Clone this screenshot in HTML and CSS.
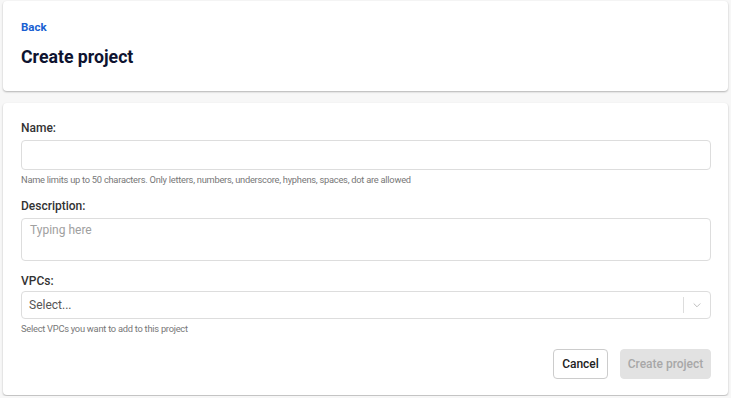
FILE: index.html
```html
<!DOCTYPE html>
<html lang="en">
<head>
    <meta charset="UTF-8">
    <meta name="viewport" content="width=device-width, initial-scale=1.0">
    <title>Create project</title>
    <link rel="stylesheet" href="styles.css">
</head>
<body>
    <div class="page">
        <div class="card header-card">
            <a href="#" class="back-link">Back</a>
            <h1>Create project</h1>
        </div>

        <div class="card form-card">
            <div class="field">
                <label for="name-input">Name:</label>
                <input type="text" id="name-input" class="text-input">
                <div class="hint">Name limits up to 50 characters. Only letters, numbers, underscore, hyphens, spaces, dot are allowed</div>
            </div>

            <div class="field">
                <label for="desc-input">Description:</label>
                <textarea id="desc-input" placeholder="Typing here"></textarea>
            </div>

            <div class="field last">
                <label class="tight">VPCs:</label>
                <div class="select">
                    <span class="select-placeholder">Select...</span>
                    <span class="select-sep"></span>
                    <span class="select-arrow">
                        <svg width="12" height="12" viewBox="0 0 20 20"><path d="M4.5 7.5 L10 13 L15.5 7.5" fill="none" stroke="#bbb" stroke-width="1.6"/></svg>
                    </span>
                </div>
                <div class="hint">Select VPCs you want to add to this project</div>
            </div>

            <div class="actions">
                <button class="btn btn-outline">Cancel</button>
                <button class="btn btn-disabled" disabled>Create project</button>
            </div>
        </div>
    </div>
</body>
</html>
```

FILE: styles.css
```css
:root {
    --bg-color: #f7f7f7; --card-bg: #fff; --text-color: #333;
    --title-color: #0e1330; --link-color: #1a5fd2; --border-color: #ddd;
    --hint-color: #777;
}
body {
    font-family: Roboto, "Noto Sans", sans-serif;
    background-color: var(--bg-color); color: var(--text-color);
    margin: 0; padding: 1px 3px; box-sizing: border-box;
}
.page { display: flex; flex-direction: column; gap: 12px; }
.card {
    background-color: var(--card-bg); border-radius: 4px;
    box-shadow: 0 1px 2px rgba(0, 0, 0, 0.28);
}
.header-card { padding: 19px 18px 22px; height: 90px; box-sizing: border-box; }
.back-link {
    display: block; color: var(--link-color); font-size: 11.5px; font-weight: 700;
    text-decoration: none; line-height: 14px;
}
h1 {
    margin: 12px 0 0; font-size: 17.7px; font-weight: 700;
    color: var(--title-color); line-height: 22px;
}
.form-card { padding: 17px 17px 16px 18px; }
.field { display: flex; flex-direction: column; margin-bottom: 12px; }
.field.last { margin-bottom: 0; }
.field label { font-size: 12px; font-weight: 500; line-height: 16px; margin-bottom: 4px; color: #333; }
.field label.tight { margin-bottom: 2px; }
.text-input, textarea, .select {
    width: 100%; box-sizing: border-box; border: 1px solid var(--border-color);
    border-radius: 4px; background-color: #fff; font-family: inherit;
}
.text-input { height: 30px; padding: 0 8px; font-size: 12px; }
textarea {
    height: 43px; resize: none; padding: 3px 8px; font-size: 12px; line-height: 16px;
}
textarea::placeholder { color: #a0a0a0; }
.select { height: 28px; display: flex; align-items: center; padding-left: 7px; }
.select-placeholder { flex-grow: 1; font-size: 12px; color: #555; }
.select-sep { width: 1px; height: 16px; background-color: #ddd; }
.select-arrow { width: 26px; display: flex; justify-content: center; align-items: center; }
.hint { font-size: 9.3px; letter-spacing: -0.25px; color: var(--hint-color); line-height: 13px; margin-top: 3px; }
.actions { display: flex; justify-content: flex-end; gap: 12px; margin-top: 14px; }
.btn {
    height: 30px; padding: 0 8px; font-family: inherit; font-size: 12px;
    font-weight: 500; border-radius: 4px; cursor: pointer;
}
.btn-outline { background-color: #fff; border: 1px solid #ccc; color: #222; width: 55px; padding: 0; }
.btn-disabled { background-color: #e2e2e2; border: 1px solid #e2e2e2; color: #a8a8a8; cursor: default; width: 91px; padding: 0; }
```
